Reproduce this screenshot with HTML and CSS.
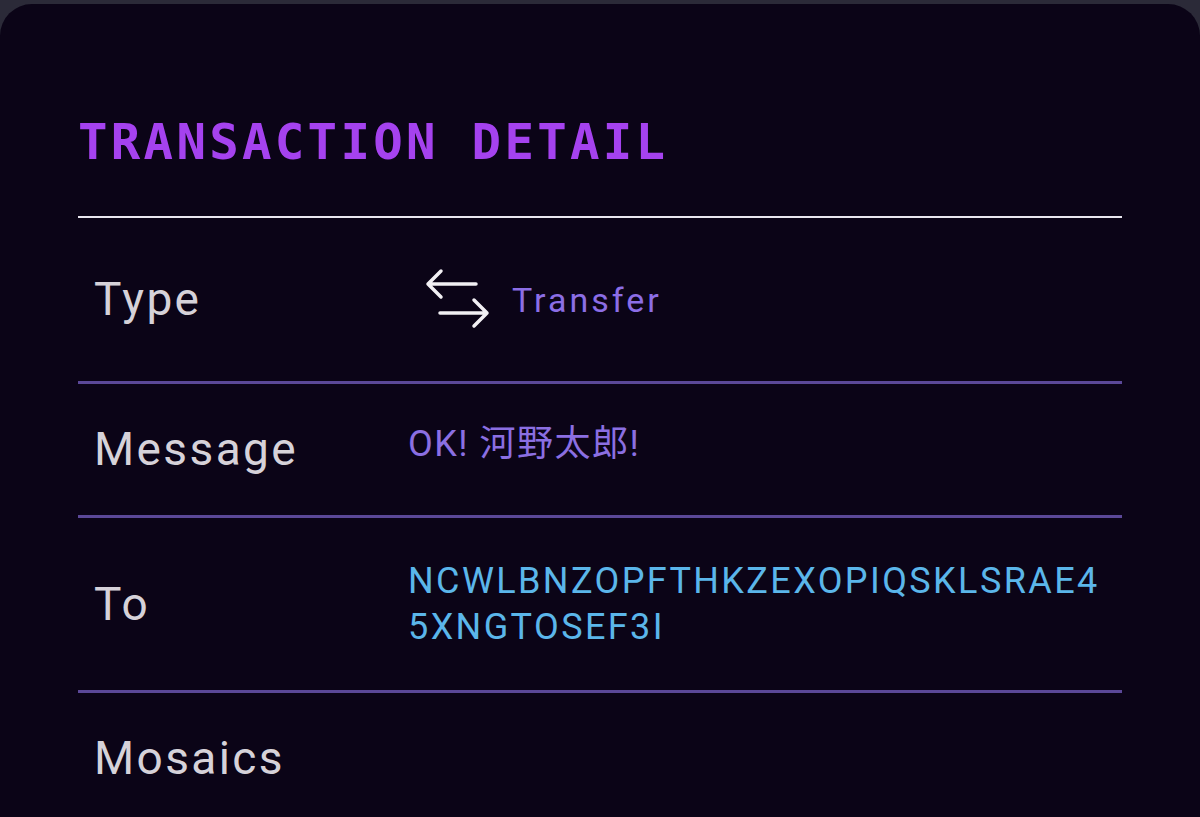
FILE: index.html
```html
<!DOCTYPE html>
<html lang="ja">
<head>
  <meta charset="UTF-8">
  <title>Transaction Detail</title>
  <link rel="stylesheet" href="styles.css">
</head>
<body>
  <div class="card">
    <h2 class="title">TRANSACTION DETAIL</h2>

    <div class="row">
      <div class="label">Type</div>
      <div class="value type">
        <svg class="type-icon" width="66" height="83" viewBox="0 0 66 83">
          <path d="M52 26 H4 M17 13 L4 26 L17 39" />
          <path d="M16 55 H63 M50 42 L63 55 L50 68" />
        </svg>
        <span class="type-name">Transfer</span>
      </div>
    </div>

    <div class="row">
      <div class="label">Message</div>
      <div class="value message">OK! 河野太郎!</div>
    </div>

    <div class="row">
      <div class="label">To</div>
      <div class="value address">NCWLBNZOPFTHKZEXOPIQSKLSRAE45XNGTOSEF3I</div>
    </div>

    <div class="row last">
      <div class="label">Mosaics</div>
      <div class="value"></div>
    </div>
  </div>
</body>
</html>
```

FILE: styles.css
```css
body {
  margin: 0;
  padding-top: 4px;
  background: #2b2a38;
  font-family: 'Roboto', 'Noto Sans CJK JP', sans-serif;
  overflow: hidden;
}
.card {
  box-sizing: border-box;
  min-height: calc(100vh - 4px);
  background: #0b0417;
  border-radius: 32px 32px 0 0;
  padding: 114px 78px 0;
}
.title {
  margin: 0;
  padding-bottom: 49px;
  border-bottom: 2px solid #e9e6ef;
  font-family: 'DejaVu Sans Mono', monospace;
  font-weight: bold;
  font-size: 49px;
  line-height: 49px;
  letter-spacing: 3.3px;
  color: #a542ef;
}
.row {
  display: flex;
  align-items: center;
  padding: 40px 0;
  border-bottom: 3px solid #5b4898;
}
.row.last {
  padding-bottom: 0;
  border-bottom: none;
}
.label {
  width: 314px;
  padding-left: 16px;
  flex-shrink: 0;
  font-size: 46px;
  line-height: 51px;
  letter-spacing: 2.4px;
  color: #d6d2d9;
}
.value {
  flex: 1;
  font-size: 36px;
  line-height: 46px;
}
.type {
  display: flex;
  align-items: center;
  height: 83px;
  padding-left: 16px;
}
.type-icon {
  display: block;
  margin-right: 22px;
}
.type-icon path {
  fill: none;
  stroke: #f2f0f4;
  stroke-width: 3.5;
  stroke-linecap: round;
  stroke-linejoin: round;
}
.type-name {
  font-size: 34px;
  letter-spacing: 3px;
  color: #8c6ee6;
}
.message {
  margin-top: -12px;
  letter-spacing: 1.5px;
  color: #8b6fe2;
}
.address {
  max-width: 700px;
  color: #5bb6ea;
  word-break: break-all;
  letter-spacing: 2.4px;
}
```
